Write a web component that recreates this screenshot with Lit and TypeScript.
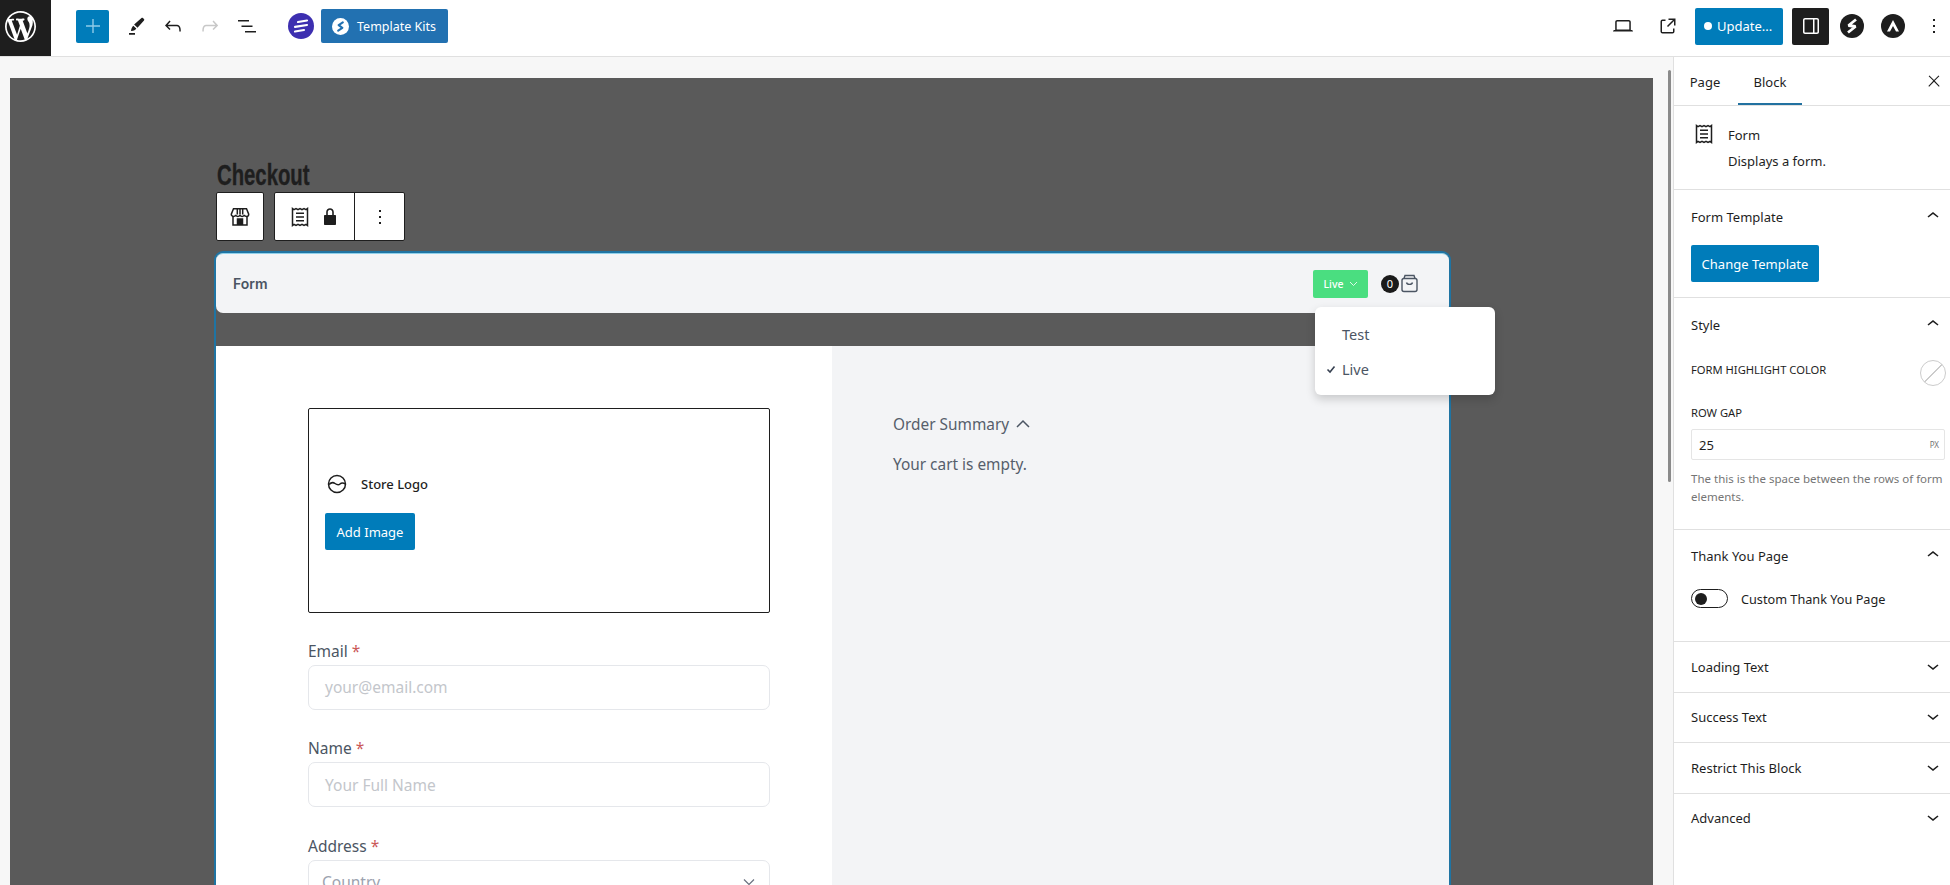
import { LitElement, html, css, svg } from "lit";
import { customElement } from "lit/decorators.js";

const P = {
  wp: "M20 10c0-5.51-4.49-10-10-10C4.48 0 0 4.49 0 10c0 5.52 4.48 10 10 10 5.51 0 10-4.48 10-10zM7.78 15.37L4.37 6.22c.55-.02 1.17-.08 1.17-.08.5-.06.44-1.13-.06-1.11 0 0-1.45.11-2.37.11-.18 0-.37 0-.58-.01C4.12 2.69 6.87 1.11 10 1.11c2.33 0 4.45.87 6.05 2.34-.68-.11-1.65.39-1.65 1.58 0 .74.45 1.36.9 2.1.35.61.55 1.36.55 2.46 0 1.49-1.4 5-1.4 5l-3.03-8.37c.54-.02.82-.17.82-.17.5-.05.44-1.25-.06-1.22 0 0-1.44.12-2.38.12-.87 0-2.33-.12-2.33-.12-.5-.03-.56 1.2-.06 1.22l.92.08 1.26 3.41zM17.41 10c.24-.64.74-1.87.43-4.25.7 1.29 1.05 2.71 1.05 4.25 0 3.29-1.73 6.24-4.4 7.78.97-2.59 1.94-5.2 2.92-7.78zM6.1 18.09C3.12 16.65 1.11 13.53 1.11 10c0-1.3.23-2.48.72-3.59C3.25 10.3 4.67 14.2 6.1 18.09zm4.03-6.63l2.58 6.98c-.86.29-1.76.45-2.71.45-.79 0-1.57-.11-2.29-.33.81-2.38 1.62-4.74 2.42-7.1z",
  plus: "M11.300 12.700V19h1.400v-6.300H19v-1.400h-6.300V5h-1.400v6.300H5v1.400h6.300z",
  pen: "M17.500 4c.4-.4 1-.4 1.400 0l1.100 1.100c.4.400.4 1 0 1.400l-6.500 7.300-3.400-3.200L17.500 4zM9.300 11.800l3 2.800c-.8 1.500-2.500 2.500-5.300 2.400.3-2.300 1-4 2.300-5.200zM5 19h6v1.700H5z",
  undo: "M18.3 11.7c-.6-.6-1.4-.9-2.3-.9H6.7l2.9-3.3-1.1-1-4.5 5L8.5 16l1-1-2.7-2.7H16c.5 0 .9.2 1.3.5 1 1 1 3.4 1 4.5v.3h1.500v-.2c0-1.500 0-4.300-1.500-5.700z",
  redo: "M15.600 6.500l-1.100 1 2.900 3.300H8c-.9 0-1.700.3-2.300.9-1.400 1.500-1.400 4.200-1.400 5.600v.2h1.500v-.3c0-1.100 0-3.500 1-4.500.3-.3.7-.5 1.300-.5h9.200L14.500 15l1.100 1.100 4.600-4.600-4.600-5z",
  list: "M3 6h11v1.500H3V6zm3.500 5.500h11V13h-11v-1.500zM21 17H10v1.500h11V17z",
  laptop: "M20.500 16h-.7V8c0-1.100-.9-2-2-2H6.200c-1.100 0-2 .9-2 2v8h-.7c-.8 0-1.500.7-1.500 1.500h20c0-.8-.7-1.500-1.500-1.500zM5.700 8c0-.3.2-.5.5-.5h11.600c.3 0 .5.2.5.5v7.600H5.700V8z",
  ext: "M19.500 4.500h-7V6h4.440l-5.970 5.970 1.060 1.060L18 7.060v4.440h1.500v-7Zm-13 1a2 2 0 0 0-2 2v10a2 2 0 0 0 2 2h10a2 2 0 0 0 2-2v-3H17v3a.5.5 0 0 1-.5.5h-10a.5.5 0 0 1-.5-.5v-10a.5.5 0 0 1 .5-.5h3V5.500h-3Z",
  side: "M18 4H6c-1.100 0-2 .9-2 2v12c0 1.100.9 2 2 2h12c1.100 0 2-.9 2-2V6c0-1.100-.9-2-2-2zM5.500 18V6c0-.3.2-.5.5-.5h8v13H6c-.3 0-.5-.2-.5-.5zm13 0c0 .3-.2.5-.5.5h-2.500v-13H18c.3 0 .5.2.5.5v12z",
  more: "M13 19h-2v-2h2v2zm0-6h-2v-2h2v2zm0-6h-2V5h2v2z",
  close: "M13 11.800l6.100-6.300-1-1-6.100 6.200-6.100-6.200-1 1 6.100 6.300-6.500 6.700 1 1 6.500-6.600 6.500 6.600 1-1z",
  up: "M6.500 12.400L12 8l5.500 4.400-.9 1.200L12 10l-4.500 3.600-1-1.200z",
  down: "M17.500 11.600L12 16l-5.500-4.400.9-1.200L12 14l4.500-3.600 1 1.200z",
  lock: "M17 10h-1.200V7c0-2.100-1.700-3.800-3.800-3.800-2.100 0-3.800 1.700-3.800 3.800v3H7c-.6 0-1 .4-1 1v8c0 .6.4 1 1 1h10c.6 0 1-.4 1-1v-8c0-.6-.4-1-1-1zm-2.800 0H9.800V7c0-1.200 1-2.200 2.200-2.200s2.200 1 2.200 2.200v3z",
};

const ic = (d: string, size = 24, cls = "") =>
  html`<svg class=${cls} width=${size} height=${size} viewBox="0 0 24 24" fill="currentColor" aria-hidden="true">${svg`<path d=${d}></path>`}</svg>`;

const receipt = (size = 24) =>
  html`<svg width=${size} height=${size} viewBox="0 0 24 24" fill="none" stroke="#1e1e1e" stroke-width="1.500" aria-hidden="true"><path d="M4.500 3.500l1.500 1.200 2-1.200 2 1.200 2-1.200 2 1.200 2-1.200 2 1.200 1.500-1.200v17l-1.500-1.200-2 1.200-2-1.200-2 1.200-2-1.200-2 1.200-2-1.200-1.500 1.200z"></path><path d="M8 8.300h8M8 12h8M8 15.700h8"></path></svg>`;

const store = html`<svg width="24" height="24" viewBox="0 0 24 24" fill="none" stroke="#1e1e1e" stroke-width="1.500" aria-hidden="true"><path d="M5.500 3.800h13l2.200 5.400c0 1.300-1 2.300-2.200 2.300s-2.100-.7-2.200-1.800c-.1 1.100-1.200 1.800-2.200 1.800s-2-.7-2.100-1.800c-.1 1.100-1.100 1.800-2.100 1.800s-2.100-.7-2.200-1.800c-.1 1.100-1 1.800-2.200 1.800s-2.200-1-2.200-2.300z"></path><path d="M9.300 4v5.500M12 4v5.500M14.700 4v5.500"></path><path d="M5 11v9h14v-9"></path><path d="M9.500 20v-6h5v6" fill="#1e1e1e"></path></svg>`;

@customElement("app-root")
export class AppRoot extends LitElement {
  static styles = css`
    :host { display: block; width: 1950px; height: 885px; overflow: hidden; position: relative; font-family: "Noto Sans", "Open Sans", sans-serif; color: #1e1e1e; background: #fff; }
    * { box-sizing: border-box; }
    svg { display: block; flex: none; }
    .top { height: 57px; border-bottom: 1px solid #e0e0e0; display: flex; align-items: center; background: #fff; padding-bottom: 4px; }
    .wp { width: 51px; height: 56px; background: #1e1e1e; color: #fff; display: flex; align-items: center; padding: 0 0 3px 5px; flex: none; align-self: flex-start; }
    .left { display: flex; align-items: center; margin-left: 25px; }
    .plus { width: 33px; height: 33px; background: #007cba; color: #8fcbe9; border-radius: 2px; display: flex; align-items: center; justify-content: center; margin-right: 15px; }
    .tool { display: flex; color: #1e1e1e; margin-right: 13px; }
    .tool.off { color: #c8c8c8; }
    .sk { width: 26px; height: 26px; border-radius: 50%; background: #3d2fb0; margin-left: 29px; margin-right: 7px; display: flex; align-items: center; justify-content: center; }
    .kits { width: 127px; height: 34px; background: #2271b1; color: #fff; border-radius: 2px; display: flex; align-items: center; gap: 8px; padding-left: 11px; font-size: 12.5px; }
    .kit-dot { width: 17px; height: 17px; border-radius: 50%; background: #fff; color: #2271b1; display: flex; align-items: center; justify-content: center; }
    .right { margin-left: auto; display: flex; align-items: center; }
    .r-ic { display: flex; }
    .update { width: 88px; height: 37px; background: #007cba; color: #fff; border-radius: 2px; display: flex; align-items: center; gap: 5px; padding-left: 9px; font-size: 13px; margin-left: 15px; }
    .update i { width: 8px; height: 8px; background: #fff; border-radius: 50%; }
    .sbtn { width: 37px; height: 37px; background: #1e1e1e; color: #fff; border-radius: 2px; display: flex; align-items: center; justify-content: center; margin-left: 9px; }
    .round { width: 24px; height: 24px; border-radius: 50%; background: #1e1e1e; color: #fff; display: flex; align-items: center; justify-content: center; }

    .body { display: flex; height: 828px; }
    .canvas { width: 1673px; background: #f7f7f7; padding: 21px 0 0 10px; position: relative; }
    .scroll { position: absolute; left: 1668px; top: 13px; width: 3px; height: 412px; background: #8a8a8a; border-radius: 2px; }
    .stage { width: 1643px; height: 807px; background: #5a5a5a; padding: 0 0 0 204px; overflow: hidden; }
    .head { height: 114px; padding: 77px 0 0 3px; }
    h1 { margin: 0; display: inline-block; font: 700 29px/40px "Liberation Sans", sans-serif; color: #1e1e1e; -webkit-text-stroke: .4px #1e1e1e; transform: scaleX(.7); transform-origin: 0 50%; }
    .btoolbar { display: flex; gap: 10px; margin-left: 2px; height: 49px; }
    .bgroup { display: flex; background: #fff; border: 1px solid #1e1e1e; border-radius: 2px; height: 49px; }
    .bcell { display: flex; align-items: center; justify-content: center; height: 100%; }
    .c1 { width: 46px; }
    .c2 { width: 80px; gap: 6px; border-right: 1px solid #1e1e1e; }
    .c3 { width: 49px; }
    .block { margin-top: 10px; width: 1237px; border: 2px solid #1f74a3; border-bottom: 0; border-radius: 9px 9px 0 0; position: relative; height: 662px; }
    .bhead { height: 60px; background: #f3f4f6; border-top: 1px solid #8fd0ea; border-radius: 7px; display: flex; align-items: center; padding: 0 30px 0 17px; }
    .bhead b { font: 600 14px "Inter", sans-serif; color: #4b5563; }
    .live { margin-left: auto; width: 55px; height: 28px; background: #4ade80; color: #fff; border-radius: 2px; display: flex; align-items: center; justify-content: center; gap: 5px; font-size: 10.5px; font-weight: 500; }
    .zero { width: 18px; height: 18px; border-radius: 50%; background: #1a1a1a; color: #fff; font-size: 11px; display: flex; align-items: center; justify-content: center; margin-left: 13px; }
    .cart { color: #4b5563; margin-left: 1px; }
    .menu { position: absolute; left: 1099px; top: 54px; width: 180px; height: 88px; background: #fff; border-radius: 6px; box-shadow: 0 4px 10px rgba(0,0,0,.18); padding: 9px 0 0 27px; font-size: 14.5px; color: #4b5563; z-index: 2; }
    .mi { height: 35px; display: flex; align-items: center; position: relative; }
    .mi svg { position: absolute; left: -16px; top: 13px; }
    .gap { height: 33px; }
    .cols { display: grid; grid-template-columns: 616px 617px; height: 570px; }
    .lcol { background: #fff; padding: 62px 62px 0 92px; }
    .rcol { background: #f3f4f6; padding: 66px 0 0 61px; color: #565e6b; font-size: 15.4px; }
    .os { display: flex; align-items: center; gap: 6px; height: 24px; }
    .empty { margin-top: 17px; line-height: 24px; }
    .logo { height: 205px; border: 1px solid #1e1e1e; border-radius: 2px; padding: 64px 0 0 16px; }
    .lrow { display: flex; align-items: center; gap: 14px; height: 22px; padding-left: 2px; font-size: 13px; font-weight: 500; color: #1e1e1e; }
    .addimg { margin-top: 18px; width: 90px; height: 37px; background: #007cba; color: #fff; border-radius: 2px; display: flex; align-items: center; justify-content: center; font-size: 13px; }
    .field { margin-top: 26.5px; }
    .logo + .field { margin-top: 25.5px; }
    .lab { display: block; font-size: 15.5px; line-height: 24px; color: #4b5563; height: 26px; }
    .lab em { color: #b91c1c; font-style: normal; opacity: .75; }
    .inp { height: 45px; border: 1.5px solid #e5e7eb; border-radius: 7px; display: flex; align-items: center; padding: 0 16px; font-size: 15.5px; color: #c3c6cb; background: #fff; }
    .inp.sel { padding: 0 13px; justify-content: space-between; color: #9ca3af; }

    aside { width: 277px; border-left: 1px solid #e0e0e0; background: #fff; font-size: 13px; flex: none; }
    .tabs { height: 49px; border-bottom: 1px solid #e0e0e0; display: flex; padding-left: 4px; position: relative; }
    .tab { width: 64px; display: flex; align-items: center; justify-content: center; height: 48px; padding-top: 2px; color: #1e1e1e; font-size: 13px; }
    .tab.on { box-shadow: inset 0 -2px 0 #2271a0; margin-left: 6px; }
    .tab.p { width: 54px; }
    .x { position: absolute; right: 7px; top: 15px; }
    .card { height: 84px; border-bottom: 1px solid #e0e0e0; display: flex; padding: 16px 0 0 18px; gap: 12px; }
    .card p { margin: 0; line-height: 26px; }
    .panel { border-bottom: 1px solid #e0e0e0; padding: 0 5px 0 17px; }
    .panel:last-child { border-bottom: 0; }
    .ph { height: 49.5px; display: flex; align-items: center; justify-content: space-between; }
    .ph svg { margin-top: -2px; color: #1e1e1e; }
    .change { width: 128px; height: 37px; margin-top: 1px; background: #007cba; color: #fff; border-radius: 2px; display: flex; align-items: center; justify-content: center; font-size: 13px; }
    .caps { font-size: 11.2px; line-height: 16px; }
    .crow { display: flex; align-items: center; justify-content: space-between; height: 26px; margin-top: 5px; }
    .swatch { width: 26px; height: 26px; border: 1px solid #ccc; border-radius: 50%; margin-right: -1px; margin-top: 5px; background: linear-gradient(135deg, transparent 48%, #ccc 48%, #ccc 53%, transparent 53%); }
    .gaprow { margin-top: 22px; }
    .num { margin-top: 8px; height: 31px; border: 1px solid #e5e5e5; border-radius: 2px; display: flex; align-items: center; justify-content: space-between; padding: 0 5px 0 7px; font-size: 13px; }
    .num small { font-size: 8px; color: #757575; }
    .help { margin: 10px 0 0; font-size: 11.5px; line-height: 18px; color: #757575; }
    .tgl { display: flex; align-items: center; gap: 13px; margin-top: 7px; font-size: 12.7px; }
    .sw { width: 37px; height: 19px; border: 1px solid #1e1e1e; border-radius: 10px; padding: 3px; }
    .sw i { display: block; width: 12px; height: 12px; background: #1e1e1e; border-radius: 50%; }
  `;

  private panel(title: string) {
    return html`<div class="panel"><div class="ph"><span>${title}</span>${ic(P.down)}</div></div>`;
  }

  render() {
    return html`
      <div class="top">
        <div class="wp"><svg width="31" height="31" viewBox="0 0 20 20" fill="currentColor"><path d=${P.wp}></path></svg></div>
        <div class="left">
          <div class="plus">${ic(P.plus)}</div>
          <span class="tool">${ic(P.pen)}</span>
          <span class="tool">${ic(P.undo)}</span>
          <span class="tool off">${ic(P.redo)}</span>
          <span class="tool" style="margin-right:0">${ic(P.list)}</span>
          <div class="sk"><svg width="16" height="14" viewBox="0 0 16 14" fill="none" stroke="#fff" stroke-width="2.200" stroke-linecap="round"><path d="M5 3 14 1.500M2 7.800 14 6M2 12.500l9-1.500"></path></svg></div>
          <div class="kits">
            <span class="kit-dot"><svg width="11" height="11" viewBox="0 0 12 12" fill="none" stroke="currentColor" stroke-width="2.200" stroke-linecap="round" stroke-linejoin="round"><path d="M8.500 1.500 4 4.500 8 7.500 3.500 10.500"></path></svg></span>
            Template Kits
          </div>
        </div>
        <div class="right">
          <span class="r-ic">${ic(P.laptop)}</span>
          <span class="r-ic" style="margin-left:21px">${ic(P.ext)}</span>
          <div class="update"><i></i>Update...</div>
          <div class="sbtn">${ic(P.side)}</div>
          <div class="round" style="margin-left:11px"><svg width="14" height="16" viewBox="0 0 14 16" fill="none" stroke="#fff" stroke-width="2.800" stroke-linejoin="bevel"><path d="M11 1.500 3.500 7.500 10.500 8.500 3 14.500"></path></svg></div>
          <div class="round" style="margin-left:17px"><svg width="14" height="14" viewBox="0 0 14 14" fill="#fff"><path d="M7 1 13 12.500H10L7 7 4 12.500H1z"></path></svg></div>
          <span class="r-ic" style="margin:0 4px 0 17px">${ic(P.more)}</span>
        </div>
      </div>
      <div class="body">
        <div class="canvas">
          <div class="stage">
            <div class="head"><h1>Checkout</h1></div>
            <div class="btoolbar">
              <div class="bgroup"><div class="bcell c1">${store}</div></div>
              <div class="bgroup">
                <div class="bcell c2">${receipt()}${ic(P.lock)}</div>
                <div class="bcell c3">${ic(P.more)}</div>
              </div>
            </div>
            <div class="block">
              <div class="bhead">
                <b>Form</b>
                <div class="live">Live <svg width="9" height="6" viewBox="0 0 9 6" fill="none" stroke="#fff" stroke-opacity=".8"><path d="M1 1l3.500 3.500L8 1"></path></svg></div>
                <div class="zero">0</div>
                <svg class="cart" width="19" height="19" viewBox="0 0 19 19" fill="none" stroke="currentColor" stroke-width="1.400"><rect x="2" y="4.500" width="15" height="13" rx="2"></rect><path d="M4 4.500 5 1.500h9l1 3M6.500 8.500c.5 2.500 5.500 2.500 6 0"></path></svg>
              </div>
              <div class="menu">
                <div class="mi">Test</div>
                <div class="mi"><svg width="10" height="10" viewBox="0 0 10 10" fill="none" stroke="#374151" stroke-width="1.600"><path d="M1.500 5.500 4 8 8.500 2.500"></path></svg>Live</div>
              </div>
              <div class="gap"></div>
              <div class="cols">
                <div class="lcol">
                  <div class="logo">
                    <div class="lrow">
                      <svg width="20" height="20" viewBox="0 0 20 20" fill="none" stroke="#1e1e1e" stroke-width="1.500"><circle cx="10" cy="10" r="8.500"></circle><path d="M2 10.500c2.500-2.500 4-2.500 6-1s3.500 2 5 .5 3-1.500 5.500 0"></path></svg>
                      <span>Store Logo</span>
                    </div>
                    <div class="addimg">Add Image</div>
                  </div>
                  <div class="field"><span class="lab">Email <em>*</em></span><div class="inp">your@email.com</div></div>
                  <div class="field"><span class="lab">Name <em>*</em></span><div class="inp">Your Full Name</div></div>
                  <div class="field"><span class="lab">Address <em>*</em></span><div class="inp sel">Country<svg width="14" height="9" viewBox="0 0 14 9" fill="none" stroke="#6b7280" stroke-width="1.200"><path d="M2 1.500l5 5 5-5"></path></svg></div></div>
                </div>
                <div class="rcol">
                  <div class="os">Order Summary <svg width="16" height="10" viewBox="0 0 16 10" fill="none" stroke="#4b5563" stroke-width="1.500"><path d="M2 8l6-6 6 6"></path></svg></div>
                  <div class="empty">Your cart is empty.</div>
                </div>
              </div>
            </div>
          </div>
          <div class="scroll"></div>
        </div>
        <aside>
          <div class="tabs">
            <div class="tab p">Page</div>
            <div class="tab on">Block</div>
            <span class="x">${ic(P.close, 18)}</span>
          </div>
          <div class="card">
            ${receipt()}
            <div><p>Form</p><p>Displays a form.</p></div>
          </div>
          <div class="panel" style="height:108px">
            <div class="ph" style="height:54px"><span>Form Template</span>${ic(P.up)}</div>
            <div class="change">Change Template</div>
          </div>
          <div class="panel" style="height:232px">
            <div class="ph" style="height:54px"><span>Style</span>${ic(P.up)}</div>
            <div class="crow caps"><span>FORM HIGHLIGHT COLOR</span><span class="swatch"></span></div>
            <div class="caps gaprow">ROW GAP</div>
            <div class="num"><span>25</span><small>PX</small></div>
            <p class="help">The this is the space between the rows of form elements.</p>
          </div>
          <div class="panel" style="height:112px">
            <div class="ph" style="height:52px"><span>Thank You Page</span>${ic(P.up)}</div>
            <div class="tgl"><span class="sw"><i></i></span>Custom Thank You Page</div>
          </div>
          ${this.panel("Loading Text")}
          ${this.panel("Success Text")}
          ${this.panel("Restrict This Block")}
          ${this.panel("Advanced")}
        </aside>
      </div>
    `;
  }
}
